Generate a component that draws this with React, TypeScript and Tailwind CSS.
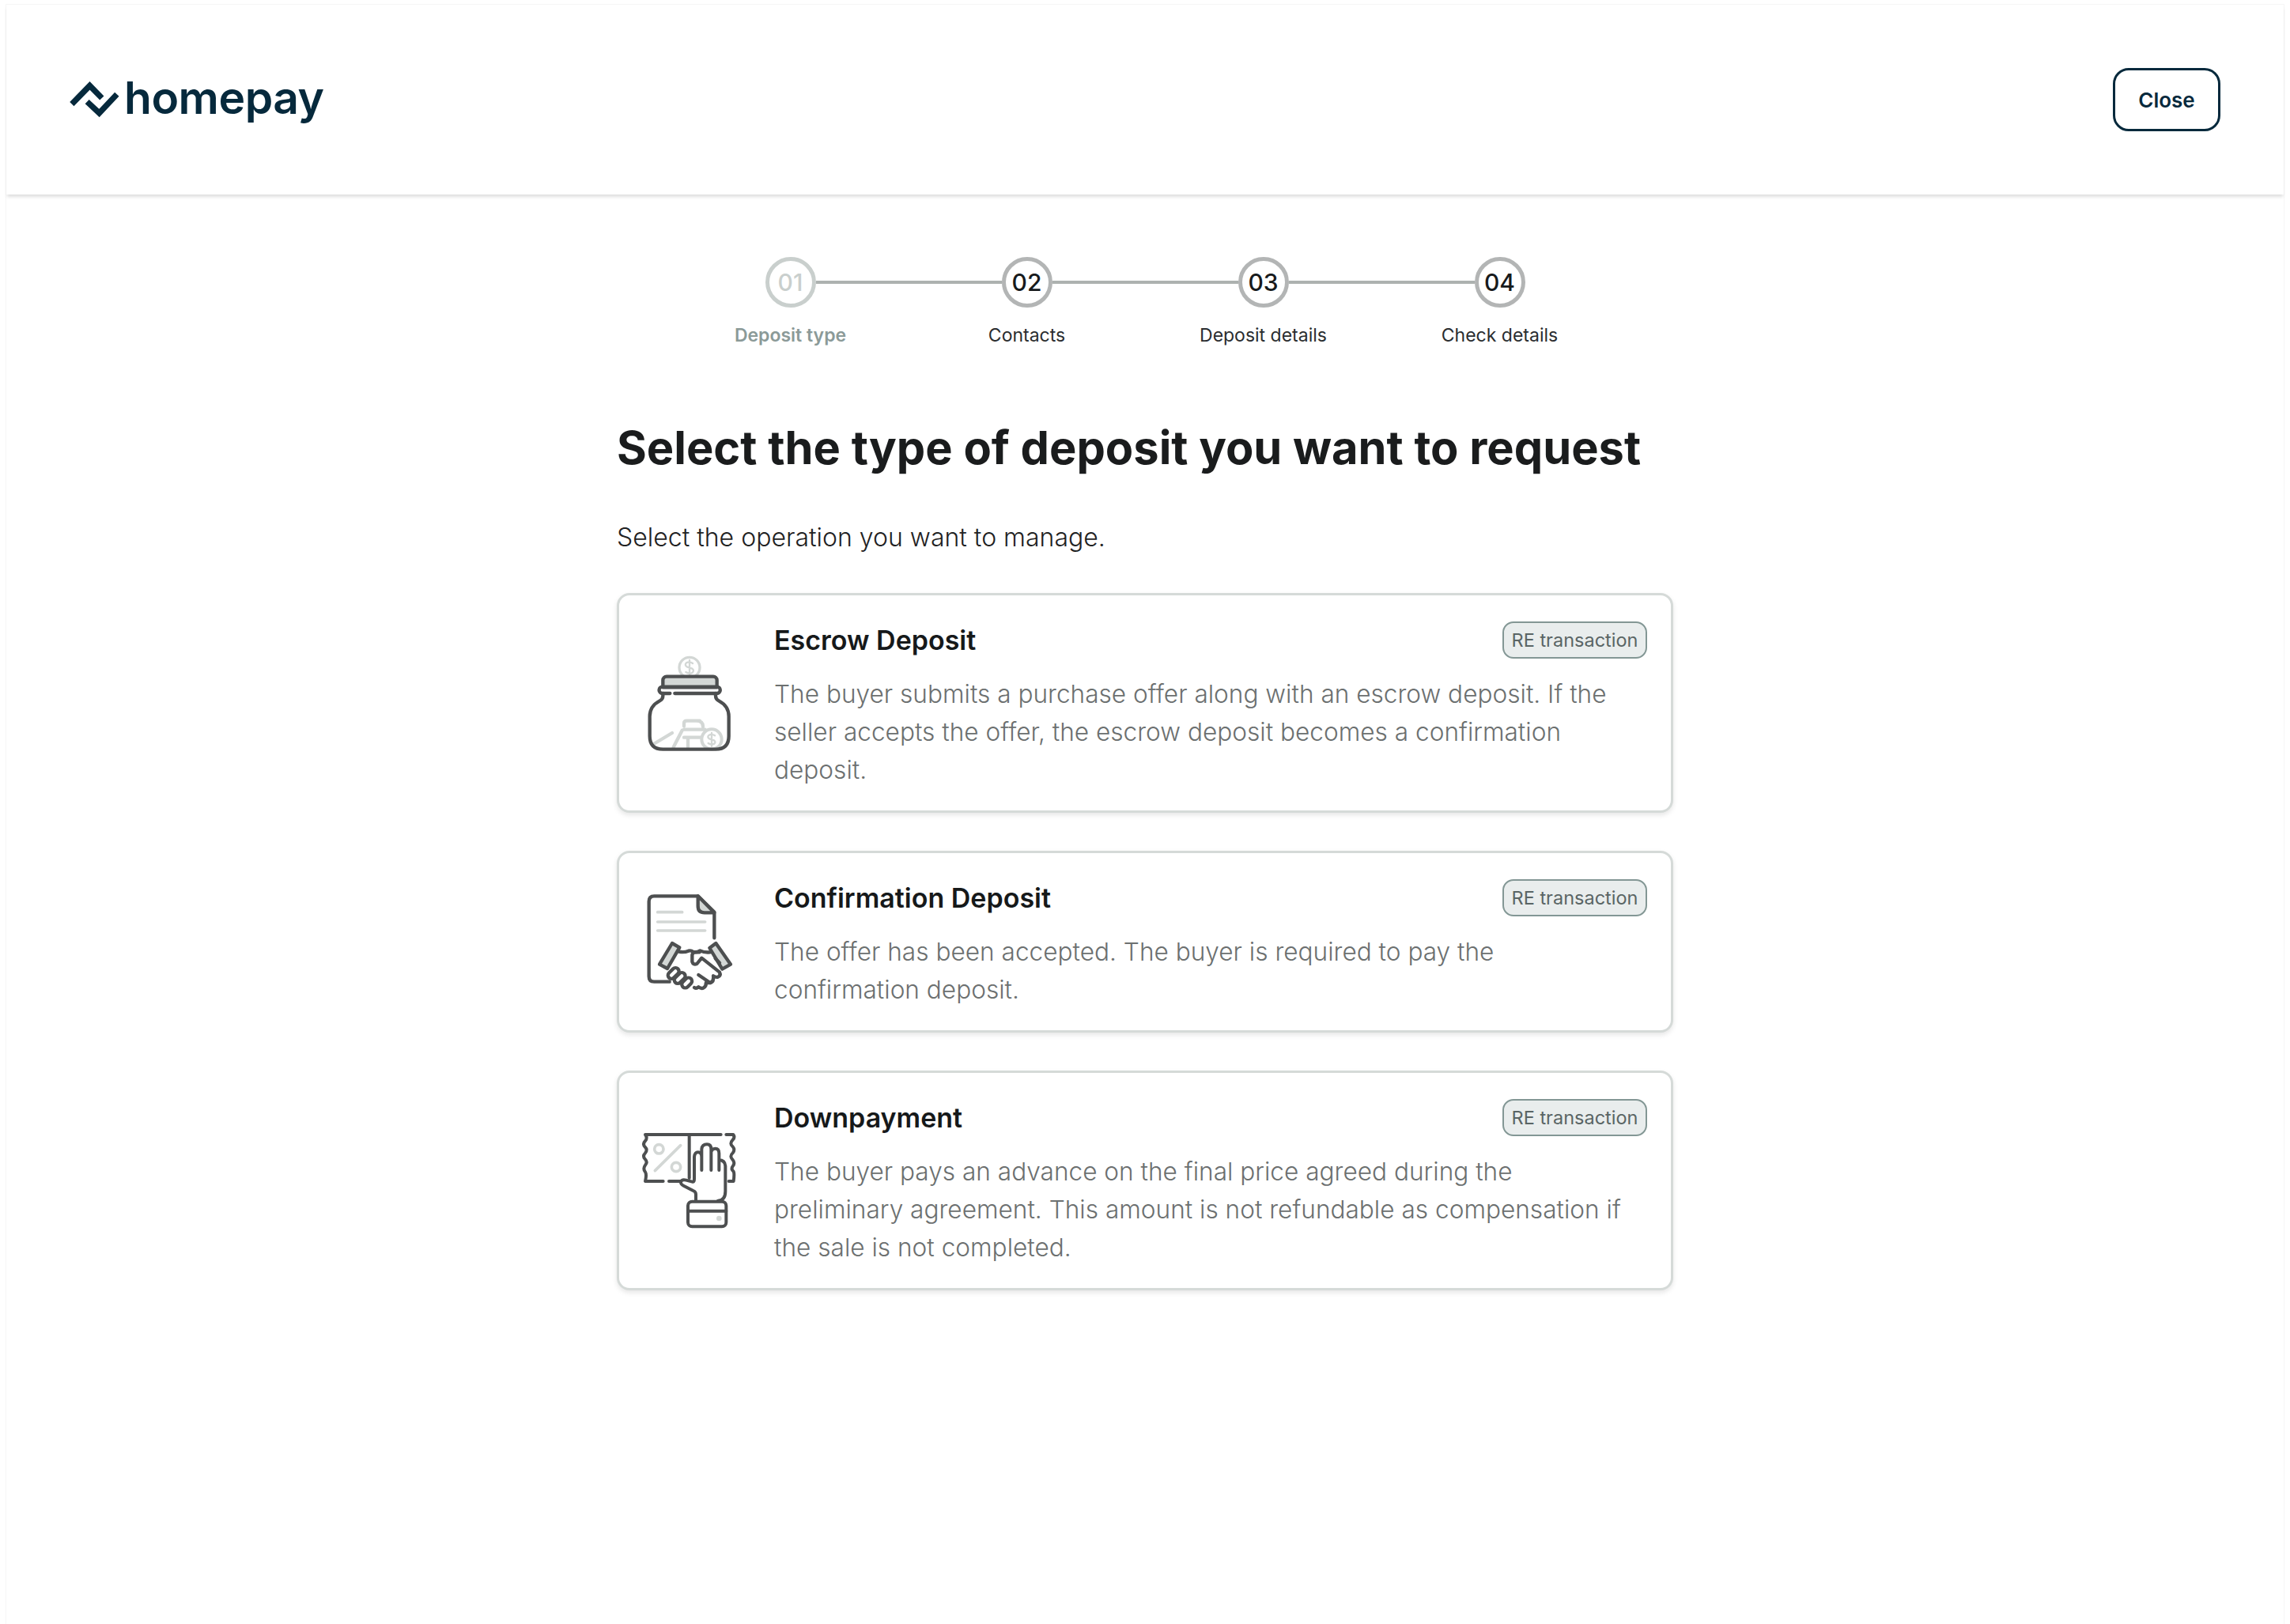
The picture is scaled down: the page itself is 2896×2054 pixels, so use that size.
const sans = 'font-["Inter",sans-serif]';

const dark = '#4d4f50';
const light = '#d3d7d5';

const JarIcon = () => (
  <svg viewBox="111 252 384 384" className="w-32 h-32" fill="none" strokeLinecap="round" strokeLinejoin="round">
    <circle cx="306" cy="310" r="39" stroke={light} strokeWidth="10" />
    <path d="M318 294 q-12-9-24-2 q-8 8 2 15 l20 7 q9 7 1 15 q-12 7-25-2 M306 282 v56" stroke={light} strokeWidth="7" />
    <path d="M205 385 V358 a14 14 0 0 1 14-14 H396 a14 14 0 0 1 14 14 V385 Z" fill={light} stroke={dark} strokeWidth="13" />
    <path d="M232 408 H203 a12.5 12.5 0 0 1 0-25 H410 a12.5 12.5 0 0 1 0 25 H250" stroke={dark} strokeWidth="13" />
    <path d="M170 600 L240 558 M245 612 L278 548 M300 612 V575 M285 575 H360 M285 545 H365 M345 512 H295 q-10 0-10 10 v10 M332 512 q25 0 25 22" stroke={light} strokeWidth="13" />
    <circle cx="390" cy="582" r="38" fill="#fff" stroke={light} strokeWidth="12" />
    <path d="M402 568 q-12-8-23-1 q-7 7 2 13 l18 6 q8 7 1 13 q-12 6-23-2 M390 558 v50" stroke={light} strokeWidth="7" />
    <path d="M205 408 V418 q0 12-12 18 Q155 456 155 495 V570 q0 50 50 50 H405 q50 0 50-50 V495 q0-39-38-59 q-12-6-12-18 V408" stroke={dark} strokeWidth="13" />
  </svg>
);

const HandshakeIcon = () => (
  <svg viewBox="111 168 384 384" className="w-32 h-32" fill="none" strokeLinecap="round" strokeLinejoin="round">
    <path d="M185 248 H278 M185 285 H365 M185 318 H365" stroke={light} strokeWidth="11" />
    <path d="M230 512 H172 q-20 0-20-20 V207 q0-20 20-20 H338 L400 248 V346" stroke={dark} strokeWidth="13" />
    <path d="M338 187 V225 q0 25 25 25 H400 Z" fill={light} stroke={dark} strokeWidth="13" />
    <path d="M240 366 L268 382 L222 462 L192 446 Z M406 366 L382 384 L430 464 L462 446 Z" fill={light} stroke={dark} strokeWidth="13" />
    <path d="M266 398 q20 4 36-3 q10-3 18 4 q14 3 26-5 q16 8 38 6" stroke={dark} strokeWidth="13" />
    <path d="M344 400 L324 400 q-8 4-8 12 v24 q4 14 18 8 l18-22 L420 476 q6 12-6 18 q-8 2-18-4 M396 498 q2 12-10 18 q-8 2-16-4 M368 518 q2 12-10 18 q-8 3-18-4 q-8 8-16 2" stroke={dark} strokeWidth="13" />
    <path d="M340 486 L384 516 M404 424 L420 440" stroke={dark} strokeWidth="13" />
    <g stroke={dark} strokeWidth="13">
      <rect x="-13" y="-24" width="26" height="48" rx="13" transform="translate(245 480) rotate(45)" />
      <rect x="-13" y="-24" width="26" height="48" rx="13" transform="translate(269 498) rotate(45)" />
      <rect x="-13" y="-22" width="26" height="44" rx="13" transform="translate(296 516) rotate(45)" />
    </g>
  </svg>
);

const TicketHandIcon = () => (
  <svg viewBox="111 237 384 384" className="w-32 h-32" fill="none" strokeLinecap="round" strokeLinejoin="round">
    <circle cx="190" cy="310" r="17" stroke={light} strokeWidth="11" />
    <circle cx="255" cy="378" r="17" stroke={light} strokeWidth="11" />
    <path d="M175 392 L272 296" stroke={light} strokeWidth="11" />
    <path d="M425 255 H138 q10 14 0 24 q-12 12 0 24 q10 10 0 22 q-12 12 0 24 q10 10 0 22 q-10 14 0 26 q6 10 0 35 H206 M228 432 H272" stroke={dark} strokeWidth="12" />
    <path d="M445 255 H472 q8 10-2 20 q-14 14 0 26 q10 12 0 24 q-14 12 0 26 q10 12 0 24 q-8 10 3 20 q4 8 0 37 H455" stroke={dark} strokeWidth="12" />
    <path d="M305 255 V420" stroke={dark} strokeWidth="12" />
    <path d="M330 505 V482 q0-10-10-14 L285 450 q-14-8-12-16 q4-10 20-6 L316 434 q8 2 8-10 V340 q2-18 14-18 q14 0 14 18 V390 M352 340 V310 q2-18 20-18 q16 0 16 18 V390 M388 322 q2-14 16-14 q14 0 14 18 V390 M418 352 q22 0 24 22 V470 q0 34-28 36" stroke={dark} strokeWidth="12" />
    <rect x="300" y="509" width="145" height="95" rx="16" stroke={dark} strokeWidth="12" />
    <path d="M300 545 H445" stroke={dark} strokeWidth="12" />
    <circle cx="418" cy="573" r="10" fill={light} />
  </svg>
);

const STEPS = ['Deposit type', 'Contacts', 'Deposit details', 'Check details'];

const DEPOSITS = [
  {
    title: 'Escrow Deposit',
    icon: <JarIcon />,
    lines: [
      'The buyer submits a purchase offer along with an escrow deposit. If the',
      'seller accepts the offer, the escrow deposit becomes a confirmation',
      'deposit.',
    ],
  },
  {
    title: 'Confirmation Deposit',
    icon: <HandshakeIcon />,
    lines: ['The offer has been accepted. The buyer is required to pay the', 'confirmation deposit.'],
  },
  {
    title: 'Downpayment',
    icon: <TicketHandIcon />,
    lines: [
      'The buyer pays an advance on the final price agreed during the',
      'preliminary agreement. This amount is not refundable as compensation if',
      'the sale is not completed.',
    ],
  },
];

const Logo = () => (
  <div className="flex items-center gap-[4px] -ml-[2px]">
    <svg viewBox="258 305 200 150" className="w-[67px] h-[50px]" fill="none">
      <path d="M272 397 L340 327 L386 374 M330 388 L376 431 L443 360" stroke="#06293c" strokeWidth="22" />
    </svg>
    <span className="text-[57px] leading-none font-semibold text-[#06293c] tracking-[-0.5px] -translate-y-[3px]">homepay</span>
  </div>
);

export default function App() {
  return (
    <div className={`${sans} min-h-[2054px] bg-white pt-[5px] px-[7px]`}>
      <div className="min-h-[2049px] border-x border-t border-[#f6f6f6]">
        <header className="h-[240px] bg-white flex items-center justify-between px-20 shadow-[0_4px_4px_-1px_rgba(0,0,0,0.13)]">
          <Logo />
          <button className="w-[136px] h-[80px] rounded-[20px] border-[3px] border-[#06293c] text-[26px] font-semibold text-[#06293c]">
            Close
          </button>
        </header>

        <div className="flex flex-col items-center pt-[79px]">
          <div className="flex items-center">
            {STEPS.map((step, i) => (
              <div key={step} className="flex items-center">
                {i > 0 && <div className="w-[235px] h-[4px] bg-[#adb2b0]" />}
                <div
                  className={
                    i === 0
                      ? 'w-16 h-16 rounded-full border-[5px] border-[#c9cfcd] flex items-center justify-center text-[30px] font-medium text-[#c9cfcd]'
                      : 'w-16 h-16 rounded-full border-[5px] border-[#b3b5b5] flex items-center justify-center text-[30px] font-medium text-[#171a1c]'
                  }
                >
                  0{i + 1}
                </div>
              </div>
            ))}
          </div>
          <div className="flex mt-[17px]">
            {STEPS.map((step, i) => (
              <div
                key={step}
                className={
                  i === 0
                    ? 'w-[299px] text-center text-[23px] leading-9 font-semibold text-[#8b9a98]'
                    : 'w-[299px] text-center text-[23px] leading-9 text-[#2a2d2f]'
                }
              >
                {step}
              </div>
            ))}
          </div>

          <main className="w-[1336px] mt-[88px]">
            <h1 className="text-[57.8px] leading-[72px] font-bold text-[#1a1c1d]">Select the type of deposit you want to request</h1>
            <p className="mt-[54px] text-[32px] leading-[48px] font-light text-[#1f2223]">Select the operation you want to manage.</p>
            <div className="mt-[46px] flex flex-col gap-[48px]">
              {DEPOSITS.map((d) => (
                <div
                  key={d.title}
                  className="flex items-center rounded-2xl border-[3px] border-[#d5dad8] bg-white pl-6 pr-[30px] pt-[33px] pb-[27px] shadow-[0_3px_6px_rgba(0,0,0,0.1)]"
                >
                  <div className="w-32 shrink-0 mb-[6px]">{d.icon}</div>
                  <div className="ml-[44px] flex-1 min-w-0">
                    <div className="flex items-center justify-between">
                      <h2 className="text-[34px] leading-[47px] font-semibold text-[#16191a]">{d.title}</h2>
                      <span className="h-[47px] w-[183px] rounded-[14px] border-2 border-[#839795] bg-[#e9eded] flex items-center justify-center text-[23.5px] text-[#5a6565]">
                        RE transaction
                      </span>
                    </div>
                    <p className="mt-[21px] text-[31.6px] leading-[48px] font-light text-[#6c7070] whitespace-nowrap">
                      {d.lines.map((line) => (
                        <span key={line} className="block">
                          {line}
                        </span>
                      ))}
                    </p>
                  </div>
                </div>
              ))}
            </div>
          </main>
        </div>
      </div>
    </div>
  );
}
